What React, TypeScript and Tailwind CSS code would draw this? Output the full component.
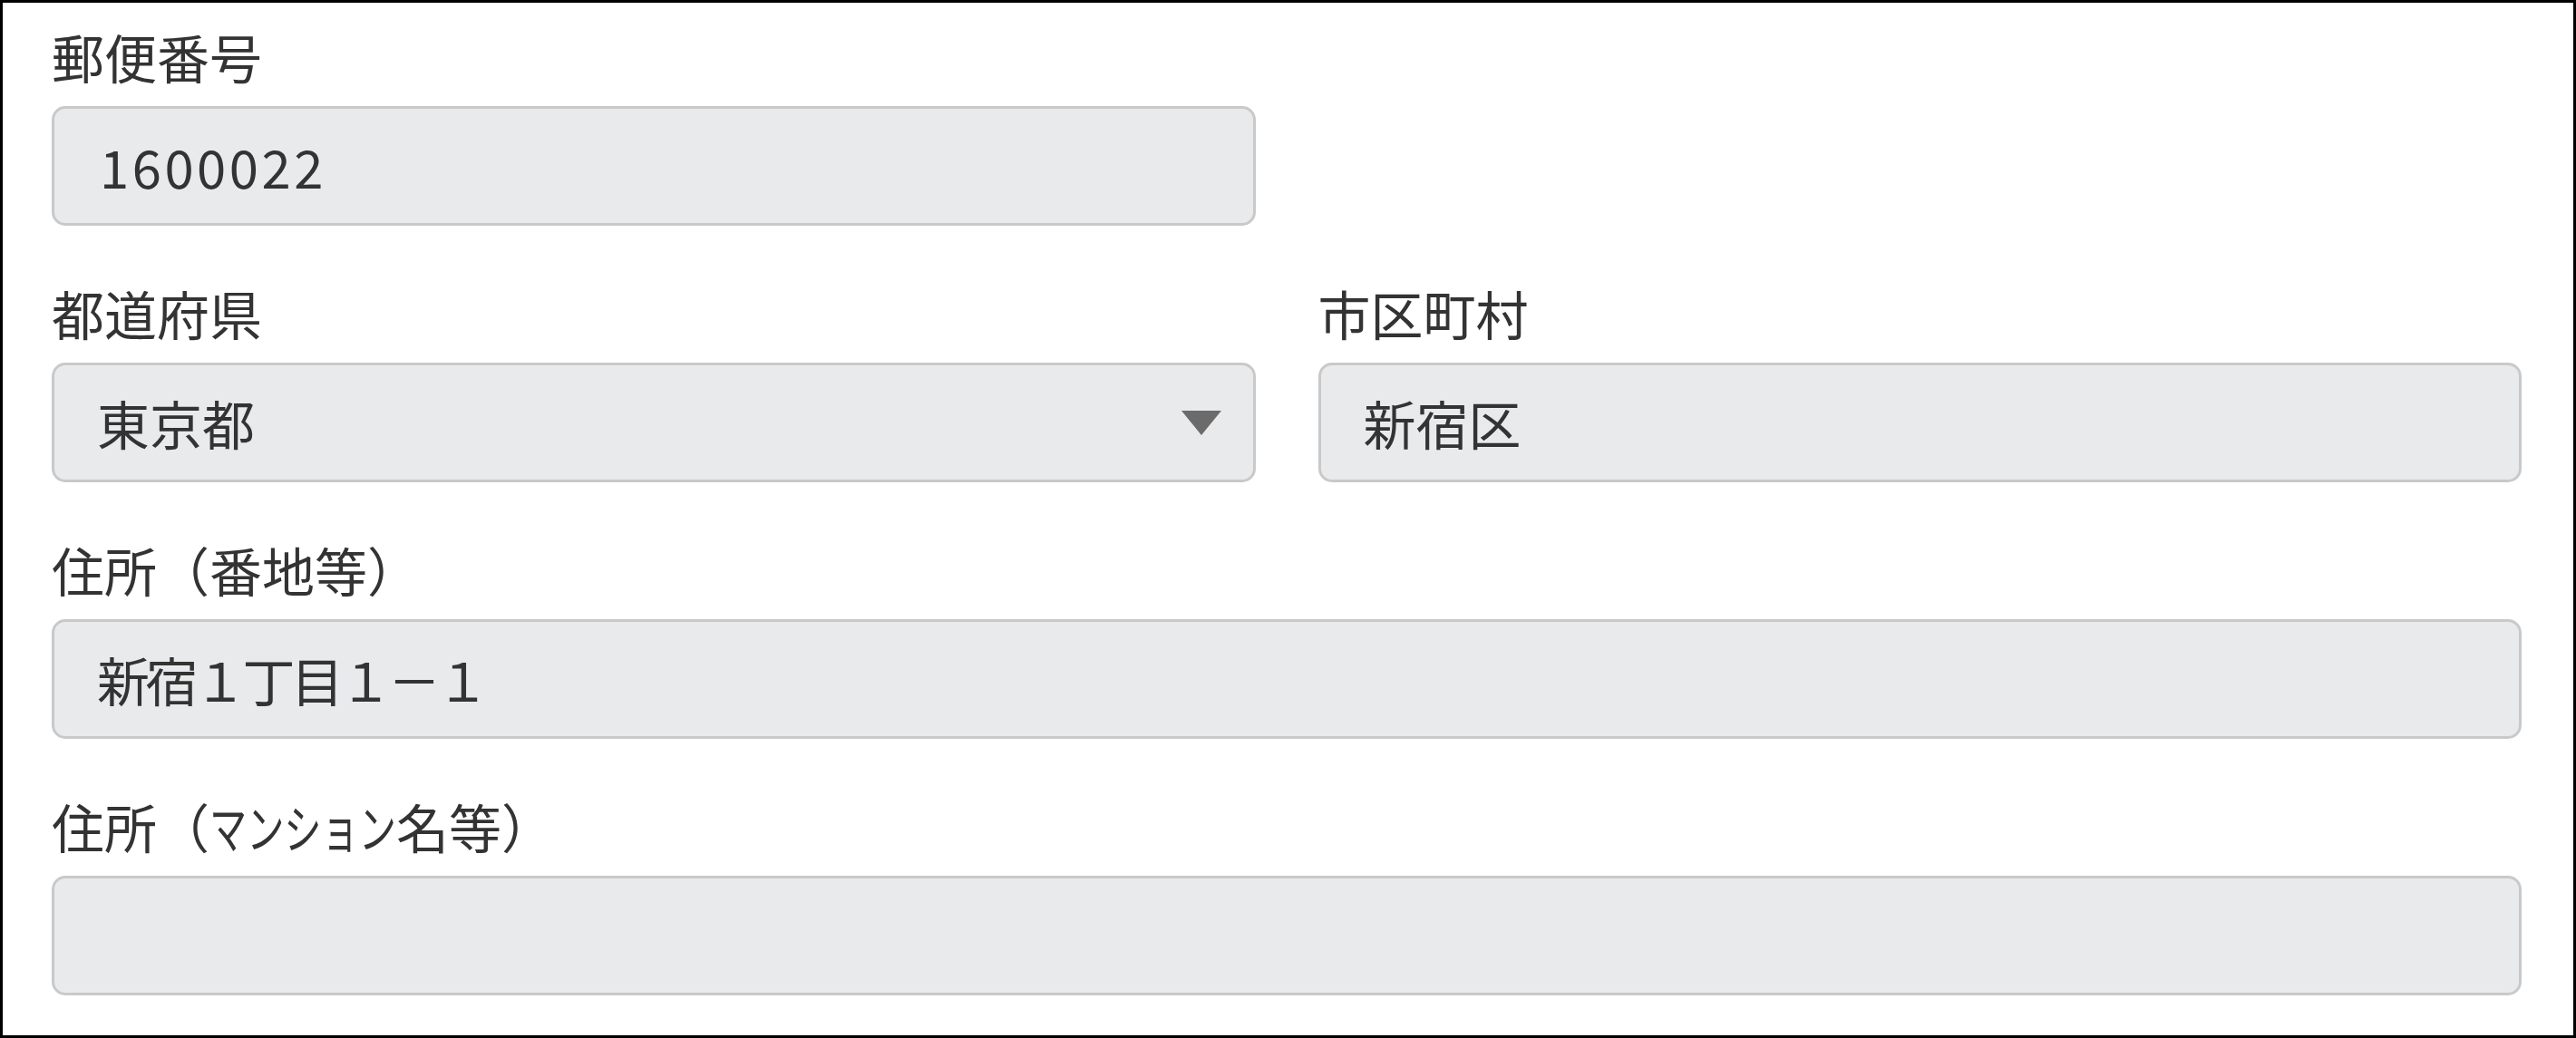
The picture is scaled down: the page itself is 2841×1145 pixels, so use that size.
import React from "react";

const font = { fontFamily: '"Noto Sans CJK JP", "Noto Sans", sans-serif' };

function Label({ children }: { children: React.ReactNode }) {
  return (
    <div className="h-[58px] mb-[26px] text-[58px] leading-[58px] text-[#333333] whitespace-nowrap">
      {children}
    </div>
  );
}

function Box({
  children,
  select,
  textClass = "",
}: {
  children?: React.ReactNode;
  select?: boolean;
  textClass?: string;
}) {
  return (
    <div className="h-[132px] flex items-center justify-between rounded-[15px] border-[3px] border-[#c9c9c9] bg-[#e9eaec] pl-[47px] pr-[35px] text-[58px] leading-none text-[#333333] whitespace-nowrap">
      <span className={textClass}>{children}</span>
      {select && (
        <svg width="44" height="27" viewBox="0 0 44 27" className="shrink-0">
          <polygon points="0,0 44,0 22,27" fill="#6b6b6b" />
        </svg>
      )}
    </div>
  );
}

export default function App() {
  return (
    <div
      className="w-[2841px] h-[1145px] border-[3px] border-black bg-white pt-[30px] pl-[54px] pr-[57px] box-border"
      style={font}
    >
      <div className="grid grid-cols-2 gap-x-[69px] mb-[67px]">
        <div>
          <Label>郵便番号</Label>
          <Box textClass="tracking-[3.5px] ml-[3px]">1600022</Box>
        </div>
        <div />
      </div>
      <div className="grid grid-cols-2 gap-x-[69px] mb-[67px]">
        <div>
          <Label>都道府県</Label>
          <Box select>東京都</Box>
        </div>
        <div>
          <Label>市区町村</Label>
          <Box>新宿区</Box>
        </div>
      </div>
      <div className="mb-[67px]">
        <Label>住所（番地等）</Label>
        <Box textClass="tracking-[-4.5px]">新宿１丁目１－１</Box>
      </div>
      <div>
        <Label>
          住所（
          <span className="inline-block w-[206px] align-top overflow-visible">
            <span className="inline-block origin-left scale-x-[0.71]">マンション</span>
          </span>
          名等）
        </Label>
        <Box />
      </div>
    </div>
  );
}
